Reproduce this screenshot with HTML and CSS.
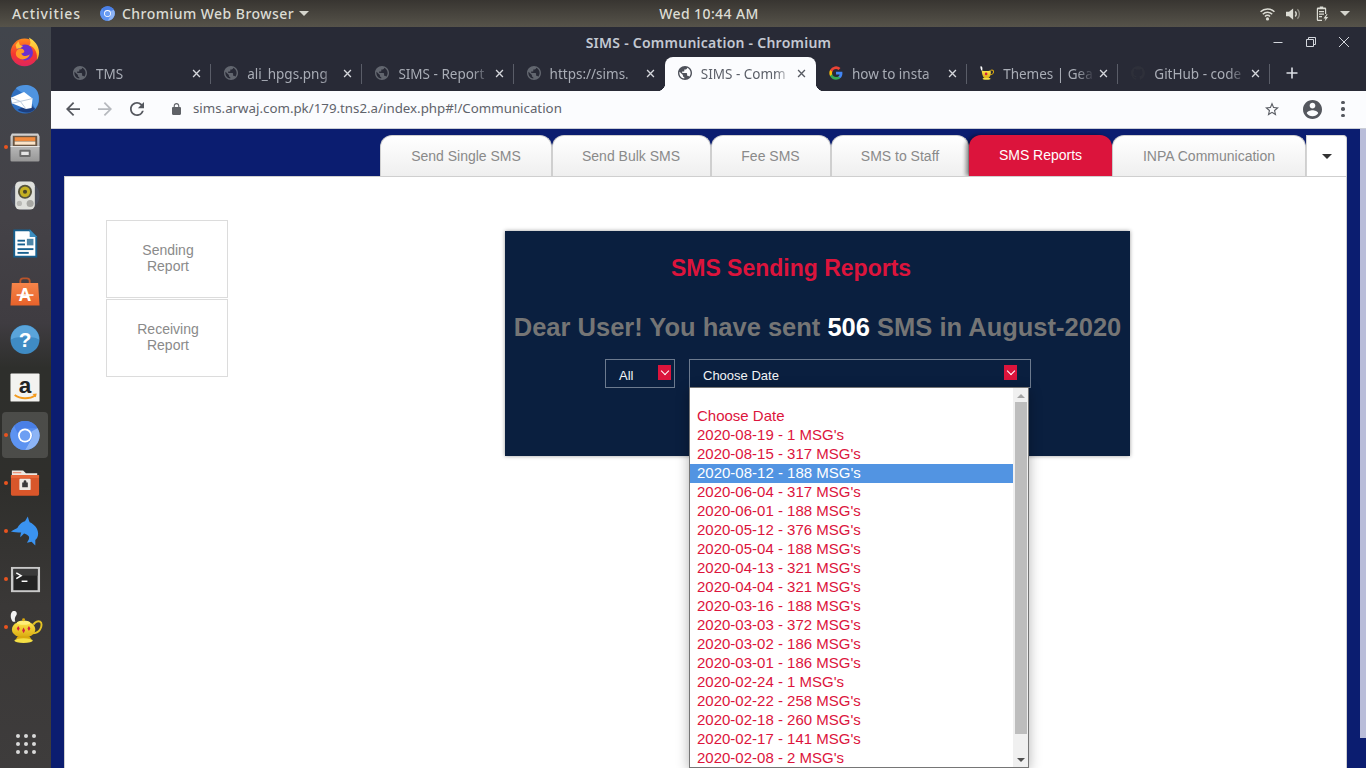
FILE: index.html
```html
<!DOCTYPE html>
<html lang="en">
<head>
<meta charset="utf-8">
<title>SIMS - Communication - Chromium</title>
<link rel="stylesheet" href="styles.css">
</head>
<body>
<svg class="defs" width="0" height="0" aria-hidden="true">
  <defs>
    <symbol id="globe" viewBox="2 2 20 20"><path d="M12 2C6.48 2 2 6.48 2 12s4.48 10 10 10 10-4.48 10-10S17.52 2 12 2zm-1 17.93c-3.95-.49-7-3.85-7-7.93 0-.62.08-1.21.21-1.79L9 15v1c0 1.1.9 2 2 2v1.93zm6.9-2.54c-.26-.81-1-1.39-1.9-1.39h-1v-3c0-.55-.45-1-1-1H8v-2h2c.55 0 1-.45 1-1V7h2c1.1 0 2-.9 2-2v-.41c2.93 1.19 5 4.06 5 7.41 0 2.08-.8 3.97-2.1 5.39z"/></symbol>
    <symbol id="close" viewBox="0 0 10 10"><path d="M1.2 1.2l7.6 7.6M8.8 1.2L1.2 8.8" fill="none" stroke="currentColor" stroke-width="1.5"/></symbol>
    <symbol id="chromium" viewBox="0 0 32 32">
      <circle cx="16" cy="16" r="15.5" fill="#5a8ff0"/>
      <path d="M16 .5A15.5 15.5 0 0 1 29.4 8.2H16a8 8 0 0 0-7.6 5.5L4.4 5.8A15.5 15.5 0 0 1 16 .5z" fill="#4a7fe6"/>
      <path d="M29.4 8.2A15.5 15.5 0 0 1 16 31.5l6.8-11.7a8 8 0 0 0 0-8z" fill="#8db4f5"/>
      <path d="M4.4 5.8A15.5 15.5 0 0 0 16 31.5l6.8-11.7a8 8 0 0 1-13.8-1z" fill="#5d93f1"/>
      <circle cx="16" cy="16" r="7.4" fill="#fff"/><circle cx="16" cy="16" r="5.6" fill="#6d9ff3"/>
    </symbol>
    <linearGradient id="ffg" x1="0" y1="0" x2="0" y2="1"><stop offset="0" stop-color="#ff8a1f"/><stop offset=".55" stop-color="#f4392f"/><stop offset="1" stop-color="#e0245e"/></linearGradient>
    <linearGradient id="ffy" x1="0" y1="0" x2="0" y2="1"><stop offset="0" stop-color="#ffe14a"/><stop offset="1" stop-color="#ff9d1f"/></linearGradient>
    <linearGradient id="bag" x1="0" y1="0" x2="0" y2="1"><stop offset="0" stop-color="#f5854a"/><stop offset="1" stop-color="#e8622a"/></linearGradient>
    <linearGradient id="gold" x1="0" y1="0" x2="0" y2="1"><stop offset="0" stop-color="#ffe94d"/><stop offset="1" stop-color="#d9a80e"/></linearGradient>
    <linearGradient id="cab" x1="0" y1="0" x2="0" y2="1"><stop offset="0" stop-color="#d2d2d2"/><stop offset="1" stop-color="#979797"/></linearGradient>
  </defs>
</svg>

<header class="topbar">
  <div class="topbar-left">
    <span class="activities">Activities</span>
    <span class="app-menu">
      <svg class="app-icon"><use href="#chromium"/></svg>
      <span>Chromium Web Browser</span>
      <i class="caret"></i>
    </span>
  </div>
  <div class="clock">Wed 10:44 AM</div>
  <div class="status">
    <svg class="st-wifi" viewBox="0 0 16 14"><path d="M.6 4.6a10.5 10.5 0 0 1 14.8 0" class="st-line"/><path d="M3 7.2a7 7 0 0 1 10 0" class="st-line"/><path d="M5.3 9.6a3.7 3.7 0 0 1 5.4 0" class="st-line"/><circle cx="8" cy="12.2" r="1.7" class="st-fill"/></svg>
    <svg class="st-vol" viewBox="0 0 16 14"><path d="M0 4.5h3.2L7.6 1v12L3.2 9.5H0z" class="st-fill"/><path d="M9.8 4.4a3.6 3.6 0 0 1 0 5.2" class="st-line"/><path d="M12.2 2a7 7 0 0 1 0 10" class="st-thin"/></svg>
    <svg class="st-bat" viewBox="0 0 15 16"><path d="M3 1.5h1.8V.5h3.4v1H10a1.2 1.2 0 0 1 1.2 1.2V8H10V3.2H3v10.6h4V15H3a1.2 1.2 0 0 1-1.2-1.2V2.7A1.2 1.2 0 0 1 3 1.5z" class="st-fill"/><path d="M4 5h5v1.2H4zM4 7.5h5v1.2H4zM4 10h3v1.2H4z" class="st-fill"/><path d="M11.5 8.2L8.5 12.4h2L9.6 15.6l3.6-4.6H11l1.6-2.8z" class="st-fill"/></svg>
    <i class="caret"></i>
  </div>
</header>

<div class="desktop">
  <nav class="dock">
    <div class="dock-item">
      <svg class="dock-icon" viewBox="0 0 32 32"><circle cx="15.5" cy="17" r="14.8" fill="url(#ffg)"/><path d="M20 1c6 3 11 9 11 16 0 3-1 6-2.6 8.5C30 19 27 11 20.5 9.5 23 7 21.5 3.5 20 1z" fill="url(#ffy)"/><circle cx="16" cy="17" r="8.5" fill="#6a2fd0"/><path d="M8 14c3-2 6-1 7 1s-1 3-3 3c1 3 6 4 9 1-1 5-8 7-12 4s-3-7-1-9z" fill="#ff9a26"/><path d="M6 9l3-4 1.5 4 3.5 1-3 2.5-4 .5z" fill="#ffbf3a"/></svg>
    </div>
    <div class="dock-item">
      <svg class="dock-icon" viewBox="0 0 32 32"><circle cx="16" cy="16" r="15" fill="#2f6fc0"/><path d="M6 4C12-1 24-1 29 7c3 6 2 14-2 19-4-8-9-14-21-22z" fill="#4f94e0"/><path d="M8 27c6 4 14 4 19-1l-6-5z" fill="#1d3f7e"/><path d="M1 14l14-6 9 7-1 10-6 1L2 20z" fill="#fff"/><path d="M1 14l10 4 13-3M2 20l9-2 6 8" fill="none" stroke="#b9c7da" stroke-width="1"/></svg>
    </div>
    <div class="dock-item dock-running">
      <svg class="dock-icon" viewBox="0 0 32 32"><path d="M2 1h28l1.5 3v25.5A1.5 1.5 0 0 1 30 31H2A1.5 1.5 0 0 1 .5 29.5V4z" fill="url(#cab)"/><path d="M3 3.5h26v11H3z" fill="#6a5644"/><path d="M5 5h22v4H5z" fill="#f18a3d"/><path d="M5 9.5h22V13H5z" fill="#fbe3c8"/><path d="M.5 14.5h31v1H.5z" fill="#ececec"/><rect x="10" y="18.5" width="12" height="7.5" rx="1" fill="#6b6b6b"/><rect x="12" y="20.5" width="8" height="3.5" fill="#e5e5e5"/></svg>
    </div>
    <div class="dock-item">
      <svg class="dock-icon" viewBox="0 0 32 32"><circle cx="16" cy="16" r="15.5" fill="#4e5569" opacity=".55"/><rect x="5.5" y="1" width="21" height="30" rx="5" fill="#dfe0dc"/><circle cx="16" cy="12" r="7.5" fill="#55533f"/><circle cx="16" cy="12" r="5.5" fill="#c4b022"/><circle cx="16" cy="12" r="2.2" fill="#4a452a"/><circle cx="10" cy="24.5" r="2.8" fill="#b9b9b5"/><circle cx="21.5" cy="24.5" r="3.8" fill="#a7a7a3"/></svg>
    </div>
    <div class="dock-item">
      <svg class="dock-icon" viewBox="0 0 32 32"><path d="M3.5 1h18L29 8.5V31H3.5z" fill="#17608f"/><path d="M5.5 3h15l6.5 6.5V29H5.5z" fill="#fff"/><path d="M21 1l8 8h-8z" fill="#3d8ec0"/><rect x="8" y="12" width="8" height="2" fill="#17608f"/><rect x="8" y="16" width="8" height="2" fill="#17608f"/><rect x="18" y="11" width="7" height="7" fill="#4c86a8"/><rect x="8" y="21" width="17" height="2" fill="#17608f"/><rect x="8" y="25" width="12" height="2" fill="#17608f"/></svg>
    </div>
    <div class="dock-item">
      <svg class="dock-icon" viewBox="0 0 32 32"><path d="M11 7V4.5A3 3 0 0 1 14 2h4a3 3 0 0 1 3 2.5V7" fill="none" stroke="#b9542a" stroke-width="2"/><path d="M2 7h28l1.5 24H.5z" fill="url(#bag)"/><text x="16" y="26" class="ic-a">A</text><rect x="7" y="19" width="18" height="1.6" fill="#fff"/></svg>
    </div>
    <div class="dock-item">
      <svg class="dock-icon" viewBox="0 0 32 32"><circle cx="16" cy="16" r="15.5" fill="#3f8bc4"/><path d="M1 16a15 15 0 0 1 30 0c-6-4-24-4-30 0z" fill="#5aa4da"/><text x="16" y="24" class="ic-q">?</text></svg>
    </div>
    <div class="dock-item">
      <svg class="dock-icon" viewBox="0 0 32 32"><rect x=".5" y="1" width="31" height="30" rx="1" fill="#f3f3f0"/><text x="16" y="22" class="ic-amz">a</text><path d="M5 24c6 4.5 16 4.5 22 .5" fill="none" stroke="#f39a1d" stroke-width="2"/><path d="M24 23l4.5-.5-1 4z" fill="#f39a1d"/></svg>
    </div>
    <div class="dock-item dock-running dock-active">
      <svg class="dock-icon"><use href="#chromium"/></svg>
    </div>
    <div class="dock-item dock-running">
      <svg class="dock-icon" viewBox="0 0 32 32"><path d="M2 2h12l3 3h12v6H2z" fill="#eee9e2"/><path d="M3 4h9v1H3z" fill="#e8795a"/><path d="M1 7h30v20.5a1.5 1.5 0 0 1-1.5 1.5h-27A1.5 1.5 0 0 1 1 27.5z" fill="#d9562a"/><path d="M1 7h30v3H1z" fill="#e8683a"/><rect x="10" y="11" width="12" height="12" rx="1" fill="#eeeae4"/><path d="M13 15h6v5h-6zM14.5 15v-1a1.5 1.5 0 0 1 3 0v1" fill="#3a3a3a"/></svg>
    </div>
    <div class="dock-item dock-running">
      <svg class="dock-icon" viewBox="0 0 32 32"><path d="M1 16C4 14 7 13 8 12C9 10 10 9 11 8C13 6 15 5 16 5L19 0C19.5 2 20 4 21 6C26 8 30 13 30 18C30 21 29 23 27 25L27 31L23 27L18 28C20 25 21 23 20 21C18 19 16 18 15 18L11 22C11 20 11.5 18 12 17C8 17 4 17 1 16z" fill="#3a93f0"/></svg>
    </div>
    <div class="dock-item dock-running">
      <svg class="dock-icon dock-term" viewBox="0 0 32 32"><rect x="1" y="1" width="30" height="26" fill="#c9c9c9"/><rect x="3.5" y="3" width="25" height="22" fill="#232323"/><rect x="3.5" y="3" width="25" height="7" fill="#3a3a3a"/><path d="M6.5 7l5 3-5 3" fill="none" stroke="#fff" stroke-width="1.5"/><rect x="12" y="15" width="6" height="1.5" fill="#fff"/></svg>
    </div>
    <div class="dock-item dock-running">
      <svg class="dock-icon dock-lamp" viewBox="0 0 34 34"><path d="M3 0c3-1 5 2 3.5 4.5S4.5 8 5.5 11H3C0 8 0 2 3 0z" fill="#f2f2f2"/><path d="M24 14c2-3 5-4 7-3s2 5 0 8-5 4-8 4" fill="none" stroke="#e3c224" stroke-width="2"/><ellipse cx="14" cy="19" rx="12" ry="8.5" fill="url(#gold)"/><ellipse cx="14" cy="12" rx="7" ry="2.2" fill="#fff07a"/><circle cx="14" cy="9" r="1.5" fill="#d9a80e"/><path d="M7 18l1.5-2.5L10 18l-1.5 2.5zM12.5 20l1.5-3 1.5 3-1.5 3zM18 18l1.5-2.5L21 18l-1.5 2.5z" fill="#d4213d"/><path d="M8 26h12l2 3H6z" fill="#d9a80e"/><ellipse cx="14" cy="30.5" rx="9.5" ry="2.5" fill="#f4df45"/></svg>
    </div>
    <div class="dock-grid">
      <i></i><i></i><i></i><i></i><i></i><i></i><i></i><i></i><i></i>
    </div>
  </nav>

  <main class="browser">
    <div class="titlebar">
      <span class="win-title">SIMS - Communication - Chromium</span>
      <div class="win-buttons">
        <svg viewBox="0 0 12 12"><path d="M1.5 6.5h9" class="win-line"/></svg>
        <svg viewBox="0 0 12 12"><path d="M3.5 3.5v-2h7v7h-2M1.5 3.5h7v7h-7z" class="win-line"/></svg>
        <svg viewBox="0 0 12 12"><path d="M1 1l10 10M11 1L1 11" class="win-line"/></svg>
      </div>
    </div>

    <div class="tabstrip">
      <div class="tab">
        <svg class="favicon"><use href="#globe"/></svg><span class="tab-title">TMS</span><svg class="tab-x"><use href="#close"/></svg>
      </div>
      <div class="tab">
        <svg class="favicon"><use href="#globe"/></svg><span class="tab-title">ali_hpgs.png</span><svg class="tab-x"><use href="#close"/></svg>
      </div>
      <div class="tab">
        <svg class="favicon"><use href="#globe"/></svg><span class="tab-title">SIMS - Report</span><svg class="tab-x"><use href="#close"/></svg>
      </div>
      <div class="tab tab-before-active">
        <svg class="favicon"><use href="#globe"/></svg><span class="tab-title">https://sims.</span><svg class="tab-x"><use href="#close"/></svg>
      </div>
      <div class="tab tab-active">
        <svg class="favicon"><use href="#globe"/></svg><span class="tab-title">SIMS - Comm</span><svg class="tab-x"><use href="#close"/></svg>
      </div>
      <div class="tab">
        <svg class="favicon" viewBox="0 0 24 24"><path d="M23 12.3c0-.8-.1-1.6-.2-2.3H12v4.4h6.2a5.3 5.3 0 0 1-2.3 3.5v2.8h3.7c2.1-2 3.4-4.9 3.4-8.4z" fill="#4285f4"/><path d="M12 23.5c3.1 0 5.7-1 7.6-2.8l-3.700-2.800c-1 .7-2.400 1.100-3.900 1.100-3 0-5.500-2-6.400-4.800H1.800v2.900a11.500 11.500 0 0 0 10.200 6.400z" fill="#34a853"/><path d="M5.600 14.200a6.900 6.900 0 0 1 0-4.400V6.900H1.800a11.500 11.500 0 0 0 0 10.200z" fill="#fbbc05"/><path d="M12 5.100c1.700 0 3.200.6 4.400 1.700l3.300-3.300A11.500 11.500 0 0 0 1.800 6.900l3.800 2.900C6.500 7.100 9 5.100 12 5.100z" fill="#ea4335"/></svg><span class="tab-title">how to insta</span><svg class="tab-x"><use href="#close"/></svg>
      </div>
      <div class="tab">
        <svg class="favicon" viewBox="0 0 16 16"><path d="M1 0c2 1 2 3 1.500 5L1.500 5C.5 3 0 1 1 0z" fill="#fff"/><path d="M12 5c2-1 3.500 0 3.500 1.500S14 10 11.500 10" fill="none" stroke="#d9a80e" stroke-width="1.200"/><path d="M2 5c3 1 7 1 10 0 1 3 0 7-2.500 9H5C3 12 2 8 2 5z" fill="url(#gold)"/><circle cx="7" cy="9" r="1.500" fill="#d4213d"/><ellipse cx="7.500" cy="14.500" rx="4.500" ry="1.200" fill="#f4df45"/></svg><span class="tab-title">Themes | Gea</span><svg class="tab-x"><use href="#close"/></svg>
      </div>
      <div class="tab">
        <svg class="favicon" viewBox="0 0 16 16"><path fill="#2e303a" d="M8 0C3.580 0 0 3.580 0 8c0 3.540 2.290 6.530 5.470 7.590.4.070.55-.17.55-.38v-1.340c-2.230.48-2.700-1.070-2.700-1.070-.36-.93-.89-1.170-.89-1.170-.73-.5.050-.49.050-.49.800.06 1.220.83 1.220.83.720 1.220 1.870.87 2.330.66.070-.52.280-.87.510-1.070-1.780-.2-3.640-.89-3.640-3.950 0-.87.310-1.590.820-2.150-.08-.2-.360-1.020.080-2.120 0 0 .67-.21 2.200.82a7.700 7.700 0 0 1 4 0c1.530-1.040 2.200-.82 2.200-.82.440 1.100.160 1.920.080 2.120.510.560.820 1.270.820 2.150 0 3.070-1.870 3.750-3.650 3.950.290.250.540.730.540 1.480v2.200c0 .210.150.46.550.380A8 8 0 0 0 16 8c0-4.420-3.580-8-8-8z"/></svg><span class="tab-title">GitHub - code</span><svg class="tab-x"><use href="#close"/></svg>
      </div>
      <svg class="new-tab" viewBox="0 0 12 12"><path d="M6 .5v11M.5 6h11" fill="none" stroke="#dcdfe6" stroke-width="1.6"/></svg>
    </div>

    <div class="toolbar">
      <svg class="tb-icon tb-back" viewBox="4 4 16 16"><path d="M20 11H7.830l5.590-5.590L12 4l-8 8 8 8 1.410-1.410L7.830 13H20v-2z"/></svg>
      <svg class="tb-icon tb-fwd" viewBox="4 4 16 16"><path d="M12 4l-1.410 1.410L16.170 11H4v2h12.170l-5.580 5.590L12 20l8-8z"/></svg>
      <svg class="tb-icon tb-reload" viewBox="4 4 16 16"><path d="M17.650 6.350A7.958 7.958 0 0 0 12 4c-4.420 0-7.990 3.580-7.990 8s3.570 8 7.990 8c3.730 0 6.840-2.550 7.730-6h-2.080A5.990 5.990 0 0 1 12 18c-3.310 0-6-2.690-6-6s2.690-6 6-6c1.660 0 3.140.69 4.220 1.780L13 11h7V4l-2.350 2.350z"/></svg>
      <svg class="tb-lock" viewBox="4 1 16 21"><path d="M18 8h-1V6c0-2.760-2.240-5-5-5S7 3.240 7 6v2H6c-1.100 0-2 .9-2 2v10c0 1.100.9 2 2 2h12c1.100 0 2-.9 2-2V10c0-1.100-.9-2-2-2zM9 6c0-1.660 1.340-3 3-3s3 1.340 3 3v2H9V6z"/></svg>
      <span class="url">sims.arwaj.com.pk/179.tns2.a/index.php#!/Communication</span>
      <svg class="tb-star" viewBox="2 2 20 19"><path d="M22 9.240l-7.190-.62L12 2 9.190 8.630 2 9.240l5.460 4.730L5.820 21 12 17.270 18.180 21l-1.630-7.030L22 9.240zM12 15.400l-3.760 2.270 1-4.280-3.320-2.880 4.380-.38L12 6.100l1.710 4.040 4.380.38-3.320 2.880 1 4.280L12 15.400z"/></svg>
      <svg class="tb-account" viewBox="2 2 20 20"><path d="M12 2C6.480 2 2 6.480 2 12s4.480 10 10 10 10-4.480 10-10S17.520 2 12 2zm0 3c1.660 0 3 1.340 3 3s-1.340 3-3 3-3-1.340-3-3 1.340-3 3-3zm0 14.200c-2.500 0-4.710-1.280-6-3.220.03-1.990 4-3.080 6-3.080 1.990 0 5.970 1.090 6 3.080-1.290 1.940-3.500 3.220-6 3.220z"/></svg>
      <div class="tb-menu"><i></i><i></i><i></i></div>
    </div>

    <div class="page">
      <div class="page-scroll"></div>
      <div class="nav-tabs">
        <a class="nav-tab nt-1">Send Single SMS</a>
        <a class="nav-tab nt-2">Send Bulk SMS</a>
        <a class="nav-tab nt-3">Fee SMS</a>
        <a class="nav-tab nt-4">SMS to Staff</a>
        <a class="nav-tab nt-5 nav-tab-active">SMS Reports</a>
        <a class="nav-tab nt-6">INPA Communication</a>
        <a class="nav-more"><i class="nav-caret"></i></a>
      </div>
      <div class="content">
        <aside class="side">
          <a class="side-item">Sending<br>Report</a>
          <a class="side-item">Receiving<br>Report</a>
        </aside>
        <section class="panel">
          <h2 class="panel-title">SMS Sending Reports</h2>
          <h3 class="panel-head">Dear User! You have sent <b>506</b> SMS in August-2020</h3>
          <div class="filters">
            <div class="select select-all"><span>All</span><i class="sel-arrow"></i></div>
            <div class="select select-date">
              <span>Choose Date</span><i class="sel-arrow"></i>
              <div class="dropdown">
                <ul class="options">
                  <li>&nbsp;</li>
                  <li>Choose Date</li>
                  <li>2020-08-19 - 1 MSG's</li>
                  <li>2020-08-15 - 317 MSG's</li>
                  <li class="opt-hl">2020-08-12 - 188 MSG's</li>
                  <li>2020-06-04 - 317 MSG's</li>
                  <li>2020-06-01 - 188 MSG's</li>
                  <li>2020-05-12 - 376 MSG's</li>
                  <li>2020-05-04 - 188 MSG's</li>
                  <li>2020-04-13 - 321 MSG's</li>
                  <li>2020-04-04 - 321 MSG's</li>
                  <li>2020-03-16 - 188 MSG's</li>
                  <li>2020-03-03 - 372 MSG's</li>
                  <li>2020-03-02 - 186 MSG's</li>
                  <li>2020-03-01 - 186 MSG's</li>
                  <li>2020-02-24 - 1 MSG's</li>
                  <li>2020-02-22 - 258 MSG's</li>
                  <li>2020-02-18 - 260 MSG's</li>
                  <li>2020-02-17 - 141 MSG's</li>
                  <li>2020-02-08 - 2 MSG's</li>
                </ul>
                <div class="dd-scroll"><i class="dd-up"></i><i class="dd-thumb"></i><i class="dd-down"></i></div>
              </div>
            </div>
          </div>
        </section>
      </div>
    </div>
  </main>
</div>
</body>
</html>
```

FILE: styles.css
```css
* { box-sizing: border-box; }
html, body { margin: 0; height: 100%; }
body {
  width: 1366px;
  height: 768px;
  overflow: hidden;
  display: flex;
  flex-direction: column;
  font-family: "Liberation Sans", Arial, sans-serif;
  background: #282a36;
}
.defs { position: absolute; }

/* GNOME top bar */
.topbar {
  height: 27px;
  flex: none;
  display: flex;
  align-items: center;
  justify-content: space-between;
  padding: 0 0 0 12px;
  background: linear-gradient(#383531, #56534a);
  color: #dcdcd4;
  font-family: "Noto Sans", sans-serif;
  font-size: 14px;
  font-weight: 500;
  position: relative;
}
.topbar-left { display: flex; align-items: center; }
.activities { width: 88px; letter-spacing: .85px; }
.app-menu { display: flex; align-items: center; letter-spacing: .46px; }
.app-icon { width: 15px; height: 15px; margin-right: 7px; }
.caret {
  display: block;
  width: 0;
  height: 0;
  border-left: 5px solid transparent;
  border-right: 5px solid transparent;
  border-top: 5px solid #d5d5cd;
  margin-left: 5px;
}
.clock { position: absolute; left: 629px; width: 160px; text-align: center; letter-spacing: .4px; white-space: nowrap; }
.status { display: flex; align-items: center; padding-right: 16px; }
.st-wifi { width: 15px; height: 14px; margin-right: 11px; }
.st-vol { width: 15px; height: 14px; margin-right: 14px; }
.st-bat { width: 15px; height: 16px; margin-right: 5px; }
.st-line { fill: none; stroke: #dcdcd4; stroke-width: 1.6; }
.st-thin { fill: none; stroke: #8f8d84; stroke-width: 1.4; }
.st-fill { fill: #dcdcd4; }

.desktop { flex: 1; display: flex; min-height: 0; }

/* Dock */
.dock {
  width: 51px;
  flex: none;
  display: flex;
  flex-direction: column;
  align-items: center;
  background: linear-gradient(#41454c 0, #444247 26%, #3f3c41 40%, #2e2f2c 46%, #2f2f2c 62%, #3a3837 78%, #3e3c3c 100%);
}
.dock-item {
  width: 46px;
  height: 48px;
  flex: none;
  display: flex;
  align-items: center;
  justify-content: center;
  position: relative;
  left: -.5px;
}
.dock-icon { width: 30px; height: 31px; display: block; }
.dock-term { width: 31px; margin-top: 4px; }
.dock-lamp { width: 33px; height: 33px; margin-left: 2px; }
.dock-running::before {
  content: "";
  position: absolute;
  left: 2px;
  top: 22px;
  width: 4px;
  height: 4px;
  border-radius: 50%;
  background: #e9541f;
}
.dock-active { background: rgba(255, 255, 255, .14); border-radius: 4px; height: 46px; margin: 1px 0; }
.dock-active::before { top: 21px; }
.dock-grid {
  margin-top: auto;
  height: 48px;
  width: 24px;
  flex: none;
  display: grid;
  grid-template-columns: repeat(3, 4px);
  grid-auto-rows: 4px;
  gap: 4px;
  align-content: center;
  justify-content: center;
}
.dock-grid i { background: #d9d9d9; border-radius: 50%; }
.ic-a { font: 700 19px "Liberation Sans", sans-serif; fill: #fff; text-anchor: middle; }
.ic-q { font: 700 22px "Liberation Sans", sans-serif; fill: #fff; text-anchor: middle; }
.ic-amz { font: 700 24px "Liberation Sans", sans-serif; fill: #222; text-anchor: middle; }

/* Browser chrome */
.browser { flex: 1; min-width: 0; display: flex; flex-direction: column; }
.titlebar {
  height: 30px;
  flex: none;
  position: relative;
  display: flex;
  align-items: center;
  justify-content: center;
  background: #282a36;
}
.win-title {
  color: #c3c8d2;
  font: 600 14px "Noto Sans", sans-serif;
  letter-spacing: .25px;
}
.win-buttons {
  position: absolute;
  right: 16px;
  top: 9px;
  display: flex;
  gap: 21px;
}
.win-buttons svg { width: 12px; height: 12px; display: block; }
.win-line { fill: none; stroke: #d3d6dc; stroke-width: 1; }

.tabstrip {
  height: 34px;
  flex: none;
  display: flex;
  align-items: stretch;
  padding-left: 9px;
  background: #282a36;
}
.tab {
  width: 151.2px;
  flex: none;
  display: flex;
  align-items: center;
  padding: 0 10px 2px 13px;
  position: relative;
  color: #a9adb6;
}
.tab::after {
  content: "";
  position: absolute;
  right: 0;
  top: 7px;
  height: 20px;
  width: 1px;
  background: #5a5d68;
}
.tab-before-active::after, .tab-active::after { display: none; }
.favicon { width: 14px; height: 14px; flex: none; fill: #62666f; }
.tab-title {
  flex: 1;
  min-width: 0;
  margin: 2px 4px 0 9px;
  white-space: nowrap;
  font: 13.5px "Noto Sans", sans-serif;
  -webkit-mask-image: linear-gradient(to right, #000 80%, transparent 100%);
  mask-image: linear-gradient(to right, #000 80%, transparent 100%);
}
.tab-x { width: 9px; height: 9px; flex: none; color: #d4d6db; }
.tab-active {
  background: #fbfcfe;
  border-radius: 8px 8px 0 0;
  color: #5b5f68;
}
.tab-active .favicon { fill: #4f525b; }
.tab-active .tab-x { color: #585b63; }
.tab-active::before {
  content: "";
  position: absolute;
  left: -8px;
  right: -8px;
  bottom: 0;
  height: 8px;
  background:
    radial-gradient(circle at 0 0, transparent 8px, #fbfcfe 8.5px) left bottom / 8px 8px no-repeat,
    radial-gradient(circle at 100% 0, transparent 8px, #fbfcfe 8.5px) right bottom / 8px 8px no-repeat;
}
.new-tab { width: 12px; height: 12px; align-self: center; margin: -2px 0 0 16px; }

.toolbar {
  height: 38px;
  flex: none;
  display: flex;
  align-items: center;
  background: #fbfcfe;
  border-bottom: 1px solid #c9cdd6;
  padding-bottom: 1px;
}
.tb-icon { width: 14px; height: 14px; flex: none; fill: #54575e; }
.tb-back { margin-left: 15px; }
.tb-fwd { margin-left: 18px; fill: #b6b9be; }
.tb-reload { margin-left: 18px; }
.tb-lock { width: 9px; height: 12px; fill: #5f6267; margin-left: 28px; flex: none; }
.url { margin: 0 0 2px 12px; font: 13.3px "Noto Sans", sans-serif; color: #5f636b; white-space: nowrap; }
.tb-star { width: 14px; height: 14px; fill: #5b5e65; margin-left: auto; flex: none; }
.tb-account { width: 19px; height: 19px; fill: #54575e; margin-left: 24px; flex: none; }
.tb-menu { width: 4px; margin: 0 21px 0 19px; display: flex; flex-direction: column; gap: 3px; }
.tb-menu i { width: 3.5px; height: 3.5px; border-radius: 50%; background: #54575e; display: block; }

/* Page */
.page {
  flex: 1;
  min-height: 0;
  display: flex;
  flex-direction: column;
  padding: 6px 19px 0 13px;
  background: #0b1d70;
  position: relative;
}
.page-scroll {
  position: absolute;
  right: 0;
  top: 0;
  width: 6px;
  height: 609px;
  background: #b9bdd9;
}
.nav-tabs { display: flex; justify-content: flex-end; height: 41px; flex: none; }
.nav-tab {
  height: 41px;
  display: flex;
  align-items: center;
  justify-content: center;
  font-size: 14px;
  color: #8a8a8a;
  background: linear-gradient(#fff, #efefef);
  border: 1px solid #cfcfcf;
  border-bottom: 0;
  border-radius: 12px 12px 0 0;
  flex: none;
}
.nt-1 { width: 172px; }
.nt-2 { width: 159px; padding-right: 1px; }
.nt-3 { width: 120px; padding-right: 1px; }
.nt-4 { width: 138px; }
.nt-5 { width: 143px; }
.nt-6 { width: 194px; }
.nav-tab-active {
  background: #dc143c;
  color: #fff;
  border: 0;
  position: relative;
  padding-bottom: 1px;
  box-shadow: -3px 0 4px rgba(0, 0, 0, .45);
}
.nav-more {
  width: 41px;
  height: 41px;
  flex: none;
  display: flex;
  align-items: center;
  justify-content: center;
  background: #fff;
  border: 1px solid #d4d4d4;
  border-bottom: 0;
  border-radius: 0 4px 0 0;
}
.nav-caret {
  display: block;
  width: 0;
  height: 0;
  border-left: 5px solid transparent;
  border-right: 5px solid transparent;
  border-top: 5px solid #333;
}
.content {
  flex: 1;
  min-height: 0;
  display: flex;
  align-items: flex-start;
  padding: 43px 0 0 41px;
  background: #fff;
  border: 1px solid #cfcfcf;
  border-bottom: 0;
  position: relative;
}
.side { width: 122px; flex: none; display: flex; flex-direction: column; gap: 1px; }
.side-item {
  height: 78px;
  display: flex;
  align-items: center;
  justify-content: center;
  padding: 0 0 2px 2px;
  text-align: center;
  font-size: 14px;
  line-height: 16px;
  color: #8a8a8a;
  border: 1px solid #dcdcdc;
}
.panel {
  width: 625px;
  height: 225px;
  flex: none;
  margin: 11px 0 0 277px;
  padding: 24px 0 0;
  background: #0a1f3f;
  box-shadow: 0 0 4px rgba(0, 0, 0, .4);
}
.panel-title {
  margin: 0;
  padding-right: 53px;
  text-align: center;
  font-size: 23px;
  line-height: 26px;
  font-weight: 700;
  color: #dc143c;
}
.panel-head {
  margin: 31px 0 0;
  text-align: center;
  font-size: 25.5px;
  line-height: 30px;
  font-weight: 700;
  color: #757575;
  white-space: nowrap;
}
.panel-head b { color: #fff; }
.filters { display: flex; gap: 14px; margin: 17px 0 0 100px; }
.select {
  height: 29px;
  position: relative;
  display: flex;
  align-items: center;
  justify-content: space-between;
  border: 1px solid #6c7a8e;
  color: #f2f4f6;
  font-size: 13px;
  padding: 3px 13px 0 13px;
}
.select-all { width: 70px; padding-right: 3px; }
.select-date { width: 342px; }
.sel-arrow {
  width: 13px;
  height: 15px;
  background: #dc143c;
  position: relative;
  top: -2.5px;
  flex: none;
}
.sel-arrow::after {
  content: "";
  position: absolute;
  left: 4px;
  top: 3px;
  width: 5px;
  height: 5px;
  border-right: 1px solid #fff;
  border-bottom: 1px solid #fff;
  transform: rotate(45deg);
}
.dropdown {
  position: absolute;
  left: -1px;
  top: 27px;
  width: 340px;
  height: 381px;
  display: flex;
  background: #fff;
  border: 1px solid #767676;
  box-shadow: 0 3px 12px rgba(0, 0, 0, .3);
  z-index: 5;
  overflow: hidden;
}
.options {
  flex: 1;
  list-style: none;
  margin: 0;
  padding: 0;
  font-size: 15px;
  color: #dc143c;
}
.options li { height: 19px; line-height: 17px; padding-left: 7px; white-space: nowrap; }
.options .opt-hl { background: #5294e2; color: #fff; }
.dd-scroll {
  width: 15px;
  flex: none;
  display: flex;
  flex-direction: column;
  align-items: center;
  background: #f0f0f0;
  position: relative;
}
.dd-up, .dd-down {
  display: block;
  width: 0;
  height: 0;
  border-left: 4px solid transparent;
  border-right: 4px solid transparent;
}
.dd-up { border-bottom: 4px solid #a3a3a3; margin-top: 6px; }
.dd-thumb { display: block; width: 12px; height: 332px; margin-top: 4px; background: #bdbdbd; }
.dd-down { border-top: 4px solid #505050; margin-top: 24px; }
```
